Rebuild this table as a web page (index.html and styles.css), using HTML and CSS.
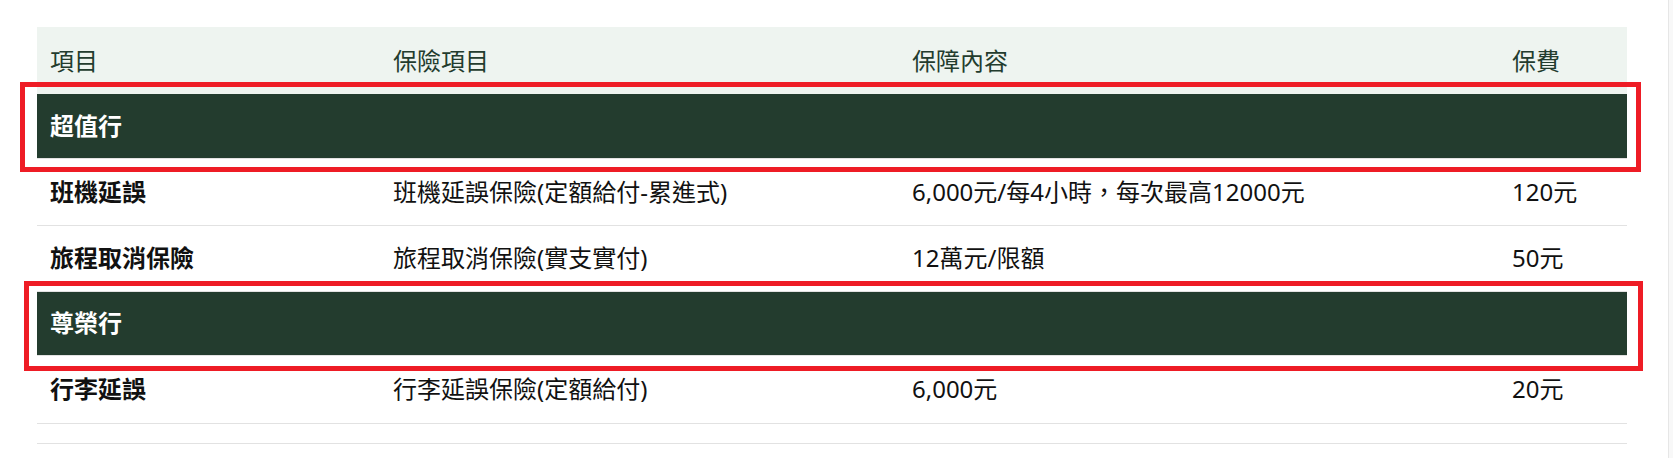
FILE: index.html
```html
<!DOCTYPE html>
<html lang="zh-Hant">
<head>
<meta charset="utf-8">
<title>保險方案</title>
<link rel="stylesheet" href="styles.css">
</head>
<body>
<div class="page">
  <main class="main">
    <div class="table-wrap">
      <table class="plan-table">
        <colgroup>
          <col class="c1"><col class="c2"><col class="c3"><col class="c4">
        </colgroup>
        <thead>
          <tr class="head-row">
            <th>項目</th>
            <th>保險項目</th>
            <th>保障內容</th>
            <th>保費</th>
          </tr>
        </thead>
        <tbody>
          <tr class="group-row"><td colspan="4">超值行</td></tr>
          <tr class="item-row r1">
            <td class="name">班機延誤</td>
            <td>班機延誤保險(定額給付-累進式)</td>
            <td>6,000元/每4小時，每次最高12000元</td>
            <td>120元</td>
          </tr>
          <tr class="item-row r2">
            <td class="name">旅程取消保險</td>
            <td>旅程取消保險(實支實付)</td>
            <td>12萬元/限額</td>
            <td>50元</td>
          </tr>
          <tr class="group-row"><td colspan="4">尊榮行</td></tr>
          <tr class="item-row r3">
            <td class="name">行李延誤</td>
            <td>行李延誤保險(定額給付)</td>
            <td>6,000元</td>
            <td>20元</td>
          </tr>
          <tr class="empty-row"><td colspan="4"></td></tr>
        </tbody>
      </table>
      <div class="mark mark-1"></div>
      <div class="mark mark-2"></div>
    </div>
  </main>
  <aside class="scroll-strip"></aside>
</div>
</body>
</html>
```
FILE: styles.css
```css
* { box-sizing: border-box; }
html, body { margin: 0; padding: 0; background: #ffffff; }
body {
  font-family: "Noto Sans", "Noto Sans CJK TC", sans-serif;
  color: #111111;
}
.page {
  display: flex;
  min-height: 458px;
}
.main {
  flex: 1;
  padding: 27px 41px 0 37px;
}
.scroll-strip {
  width: 5px;
  background: #f8f8f8;
  border-left: 1px solid #e6e6e6;
}
.table-wrap {
  position: relative;
}
.plan-table {
  width: 100%;
  border-collapse: collapse;
  table-layout: fixed;
  font-size: 24px;
}
.c1 { width: 343px; }
.c2 { width: 519px; }
.c3 { width: 600px; }
.c4 { width: 128px; }
.plan-table th,
.plan-table td {
  text-align: left;
  padding: 0 13px;
  vertical-align: middle;
  line-height: 26px;
  white-space: nowrap;
}
.head-row th {
  height: 67px;
  background: #eef4f0;
  color: #233c2e;
  font-weight: 400;
}
.group-row td {
  height: 64px;
  background: #233c2e;
  color: #ffffff;
  font-weight: 700;
  border-bottom: 1px solid #e2e2e2;
}
.item-row td {
  height: 67px;
  border-bottom: 1px solid #e2e2e2;
}
.item-row.r2 td { height: 66px; }
.item-row.r3 td { height: 68px; }
.item-row td.name { font-weight: 700; }
.empty-row td {
  height: 20px;
  border-bottom: 1px solid #e2e2e2;
}
.mark {
  position: absolute;
  border: 5px solid #ee1c25;
  pointer-events: none;
}
.mark-1 { left: -17px; top: 55px; width: 1621px; height: 90px; }
.mark-2 { left: -13px; top: 254px; width: 1619px; height: 90px; }
```
